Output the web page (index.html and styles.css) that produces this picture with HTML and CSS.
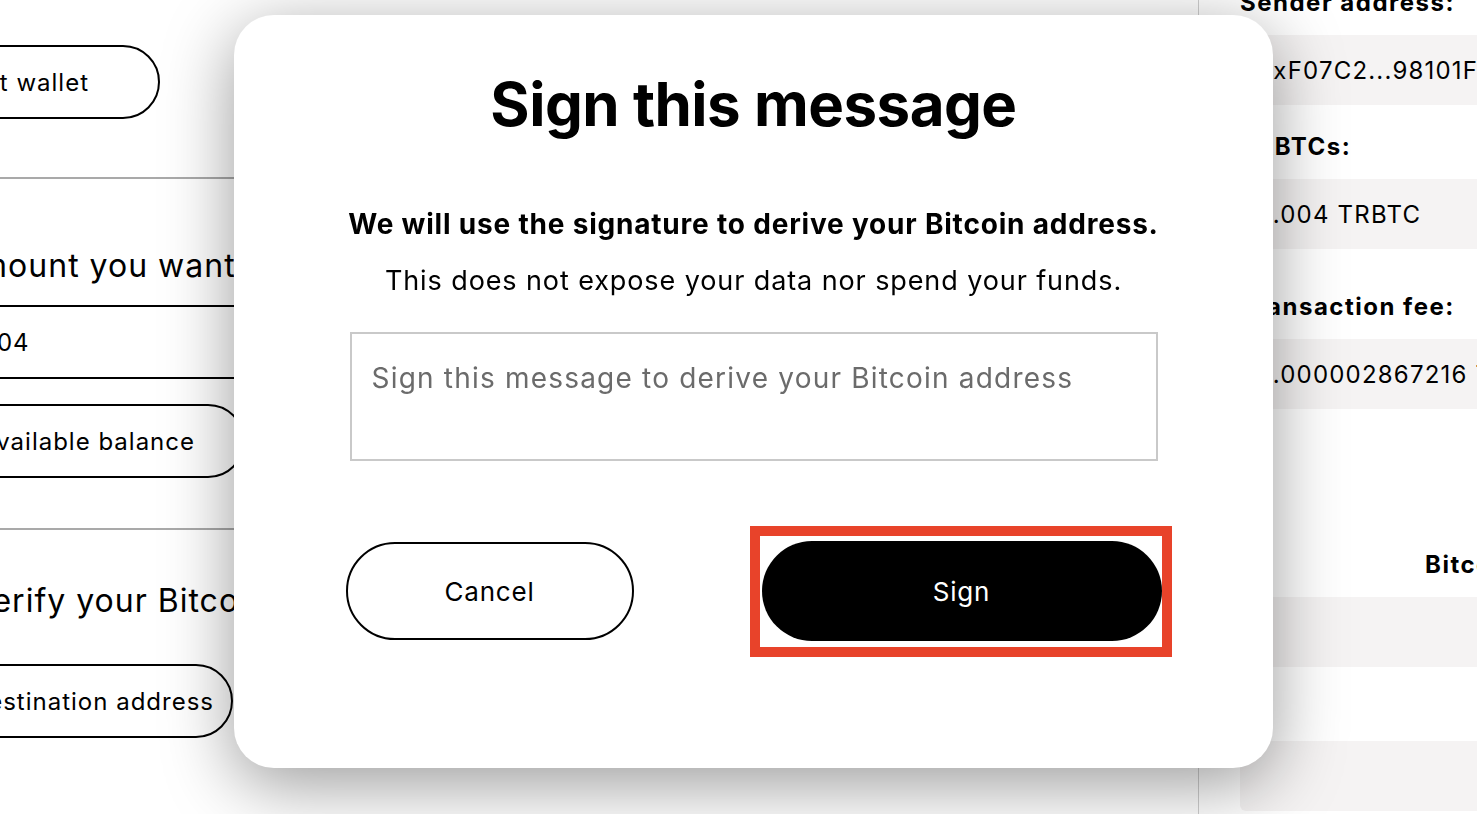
FILE: index.html
```html
<!DOCTYPE html>
<html lang="en">
<head>
<meta charset="utf-8">
<title>Sign this message</title>
<link rel="stylesheet" href="styles.css">
</head>
<body>
<div class="page">
  <section class="left">
    <div class="btn-row"><button class="pill pill-connect">Connect wallet</button></div>
    <hr class="sep sep-first">
    <h2 class="step step-amount">Amount you want to convert</h2>
    <div class="amount-input">0.004</div>
    <div class="btn-row"><button class="pill pill-balance">Use available balance</button></div>
    <hr class="sep sep-second">
    <h2 class="step step-verify">Verify your Bitcoin address</h2>
    <div class="btn-row"><button class="pill pill-dest">Get destination address</button></div>
  </section>
  <section class="middle"></section>
  <aside class="summary">
    <div class="label label-first">Sender address:</div>
    <div class="value">0xF07C2...98101F</div>
    <div class="label">TRBTCs:</div>
    <div class="value">0.004 TRBTC</div>
    <div class="label label-fee">Transaction fee:</div>
    <div class="value">0.000002867216 TRBTC</div>
    <div class="label label-btc">Bitcoin address:</div>
    <div class="value"></div>
    <div class="value value-last"></div>
  </aside>
</div>

<div class="overlay">
  <div class="modal">
    <h1 class="modal-title">Sign this message</h1>
    <p class="modal-lead">We will use the signature to derive your Bitcoin address.</p>
    <p class="modal-note">This does not expose your data nor spend your funds.</p>
    <textarea class="modal-text" placeholder="Sign this message to derive your Bitcoin address"></textarea>
    <div class="modal-actions">
      <button class="btn btn-cancel">Cancel</button>
      <button class="btn btn-sign">Sign<span class="highlight"></span></button>
    </div>
  </div>
</div>
</body>
</html>
```

FILE: styles.css
```css
* { box-sizing: border-box; }

html, body {
  margin: 0;
  padding: 0;
  width: 1477px;
  height: 814px;
  overflow: hidden;
  background: #ffffff;
  font-family: Inter, "Noto Sans", sans-serif;
  color: #000;
}

.page {
  display: grid;
  grid-template-columns: 600px 898px 500px;
  margin-left: -300px;
  height: 814px;
  letter-spacing: 1px;
}

/* ---------- left column ---------- */
.left {
  display: flex;
  flex-direction: column;
  padding-top: 45px;
}

.btn-row {
  display: flex;
  justify-content: flex-end;
}

.pill {
  height: 74px;
  border: 2px solid #000;
  border-radius: 37px;
  background: #fff;
  font-family: inherit;
  font-size: 24px;
  letter-spacing: 1px;
  color: #000;
  padding-left: 60px;
  display: flex;
  align-items: center;
}

.pill-connect { margin-right: 140px; padding-right: 69px; }
.pill-balance { margin-right: 55px; padding-right: 48px; margin-top: 25px; }
.pill-dest { margin-right: 67px; padding-right: 17px; margin-top: 43px; }

.sep {
  border: 0;
  height: 2px;
  background: #a9a9a9;
  margin: 0;
}
.sep-first { margin-top: 58px; }
.sep-second { margin-top: 50px; }

.step {
  font-size: 32px;
  font-weight: 400;
  line-height: 40px;
  margin: 0;
  white-space: nowrap;
}
.step-amount { margin-top: 67px; margin-bottom: 19px; padding-left: 256px; }
.step-verify { margin-top: 51px; padding-left: 271px; }

.amount-input {
  height: 74px;
  border-top: 2px solid #000;
  border-bottom: 2px solid #000;
  font-size: 24px;
  display: flex;
  align-items: center;
  padding-left: 258px;
}

/* ---------- right column ---------- */
.summary {
  border-left: 1px solid #cfcfcf;
  padding-left: 41px;
  display: flex;
  flex-direction: column;
}

.label {
  font-size: 24px;
  font-weight: 700;
  line-height: 30px;
  letter-spacing: 1.5px;
  margin-top: 27px;
  white-space: nowrap;
}
.label-first { margin-top: -12px; }
.label-fee { margin-top: 43px; }
.label-btc { margin-top: 141px; padding-left: 185px; }

.value {
  height: 70px;
  margin-top: 17px;
  background: #f5f3f3;
  border-radius: 6px;
  font-size: 24px;
  letter-spacing: 1.2px;
  display: flex;
  align-items: center;
  padding-left: 17px;
  white-space: nowrap;
}
.label-first + .value { margin-top: 17px; }
.value-last { margin-top: 74px; }

/* ---------- modal ---------- */
.overlay {
  position: fixed;
  inset: 0;
}

.modal {
  position: absolute;
  left: 234px;
  top: 15px;
  width: 1039px;
  height: 753px;
  background: #fff;
  border-radius: 40px;
  box-shadow: 0 16px 70px rgba(0, 0, 0, 0.4);
  display: flex;
  flex-direction: column;
  align-items: center;
  padding-top: 52px;
}

.modal-title {
  margin: 0;
  font-size: 60px;
  line-height: 74px;
  font-weight: 700;
  letter-spacing: -0.5px;
}

.modal-lead {
  margin: 65px 0 0;
  font-size: 28px;
  line-height: 36px;
  font-weight: 700;
  letter-spacing: 0.8px;
}

.modal-note {
  margin: 21px 0 0;
  font-size: 27px;
  line-height: 36px;
  font-weight: 400;
  letter-spacing: 0.9px;
}

.modal-text {
  margin-top: 33px;
  width: 808px;
  height: 129px;
  border: 2px solid #c9c9c9;
  border-radius: 0;
  padding: 26px 20px;
  font-family: inherit;
  font-size: 28px;
  line-height: 36px;
  letter-spacing: 1.2px;
  resize: none;
  outline: none;
}
.modal-text::placeholder { color: #6b6b6b; }

.modal-actions {
  margin-top: 80px;
  width: 816px;
  display: flex;
  justify-content: space-between;
  align-items: center;
}

.btn {
  font-family: inherit;
  font-size: 26px;
  letter-spacing: 0.8px;
  border-radius: 50px;
  cursor: pointer;
}

.btn-cancel {
  width: 288px;
  height: 98px;
  background: #fff;
  border: 2px solid #000;
  color: #000;
}

.btn-sign {
  position: relative;
  width: 400px;
  height: 100px;
  background: #000;
  border: 0;
  color: #fff;
}

.highlight {
  position: absolute;
  top: -15px;
  left: -12px;
  right: -10px;
  bottom: -16px;
  border: 10px solid #e8432a;
  pointer-events: none;
}
```
